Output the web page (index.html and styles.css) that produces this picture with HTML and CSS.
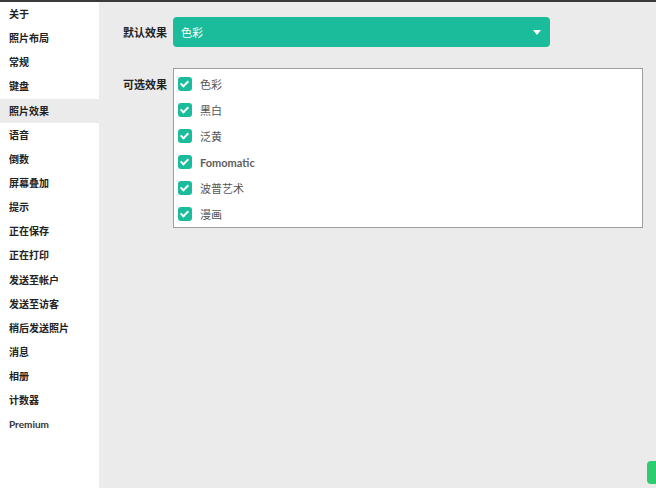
FILE: index.html
```html
<!DOCTYPE html>
<html lang="zh">
<head>
  <meta charset="UTF-8">
  <title>照片效果</title>
  <link rel="stylesheet" href="styles.css">
</head>
<body>
  <div class="app">
    <ul class="menu">
      <li>关于</li>
      <li>照片布局</li>
      <li>常规</li>
      <li>键盘</li>
      <li class="active">照片效果</li>
      <li>语音</li>
      <li>倒数</li>
      <li>屏幕叠加</li>
      <li>提示</li>
      <li>正在保存</li>
      <li>正在打印</li>
      <li>发送至帐户</li>
      <li>发送至访客</li>
      <li>稍后发送照片</li>
      <li>消息</li>
      <li>相册</li>
      <li>计数器</li>
      <li class="latin">Premium</li>
    </ul>
    <div class="main">
      <div class="field">
        <label class="field-label">默认效果</label>
        <div class="select">
          <span>色彩</span>
          <svg class="caret" width="8" height="5" viewBox="0 0 8 5"><path d="M0 0h8L4 5z" fill="#fff"/></svg>
        </div>
      </div>
      <div class="field field-list">
        <label class="field-label">可选效果</label>
        <div class="checklist">
          <div class="check-row"><span class="box"></span>色彩</div>
          <div class="check-row"><span class="box"></span>黑白</div>
          <div class="check-row"><span class="box"></span>泛黄</div>
          <div class="check-row latin"><span class="box"></span>Fomomatic</div>
          <div class="check-row"><span class="box"></span>波普艺术</div>
          <div class="check-row"><span class="box"></span>漫画</div>
        </div>
      </div>
      <div class="side-tab"></div>
    </div>
  </div>
</body>
</html>
```

FILE: styles.css
```css
html, body { margin: 0; height: 100%; }
body { font-family: Lato, "Noto Sans CJK SC", sans-serif; background: #ebebeb; border-top: 2px solid #3a3a3a; box-sizing: border-box; overflow: hidden; }
.app { display: flex; height: 100%; }

.menu { list-style: none; margin: 0; padding: 0; width: 99px; background: #fff; flex-shrink: 0; }
.menu li { height: 24.15px; line-height: 24px; padding-left: 9px; font-size: 10px; font-weight: bold; color: #222; font-family: "Noto Sans CJK SC", sans-serif; }
.menu li.latin { font-family: Lato, sans-serif; color: #333; }
.menu li.active { background: #ebebeb; }

.main { flex: 1; position: relative; padding: 15px 0 0 24px; }
.field { display: flex; align-items: flex-start; }
.field-label { width: 50px; font-size: 11px; font-weight: bold; color: #222; line-height: 30px; font-family: "Noto Sans CJK SC", sans-serif; }
.select { width: 377px; height: 30px; box-sizing: border-box; background: #1abc9c; border-radius: 4px; display: flex; align-items: center; justify-content: space-between; padding: 0 9px 0 8px; color: #fff; font-size: 11px; }
.caret { display: block; }

.field-list { margin-top: 21px; }
.field-list .field-label { line-height: 32px; }
.checklist { width: 470px; height: 160px; box-sizing: border-box; background: #fff; border: 1px solid #9e9e9e; padding: 2px 0 0 4px; overflow: hidden; }
.check-row { display: flex; align-items: center; height: 26px; font-size: 11px; color: #555; font-family: "Noto Sans CJK SC", sans-serif; }
.check-row.latin { font-family: Lato, sans-serif; font-weight: bold; color: #5e5e5e; }
.box { width: 14px; height: 14px; border-radius: 3px; background: #1abc9c; margin-right: 8px; position: relative; flex-shrink: 0; }
.box::after { content: ""; position: absolute; left: 4px; top: 2px; width: 3px; height: 6px; border: solid #fff; border-width: 0 2px 2px 0; transform: rotate(45deg); }

.side-tab { position: absolute; right: 0; bottom: 4px; width: 9px; height: 23px; background: #2ecc71; border-radius: 4px 0 0 4px; }
```
